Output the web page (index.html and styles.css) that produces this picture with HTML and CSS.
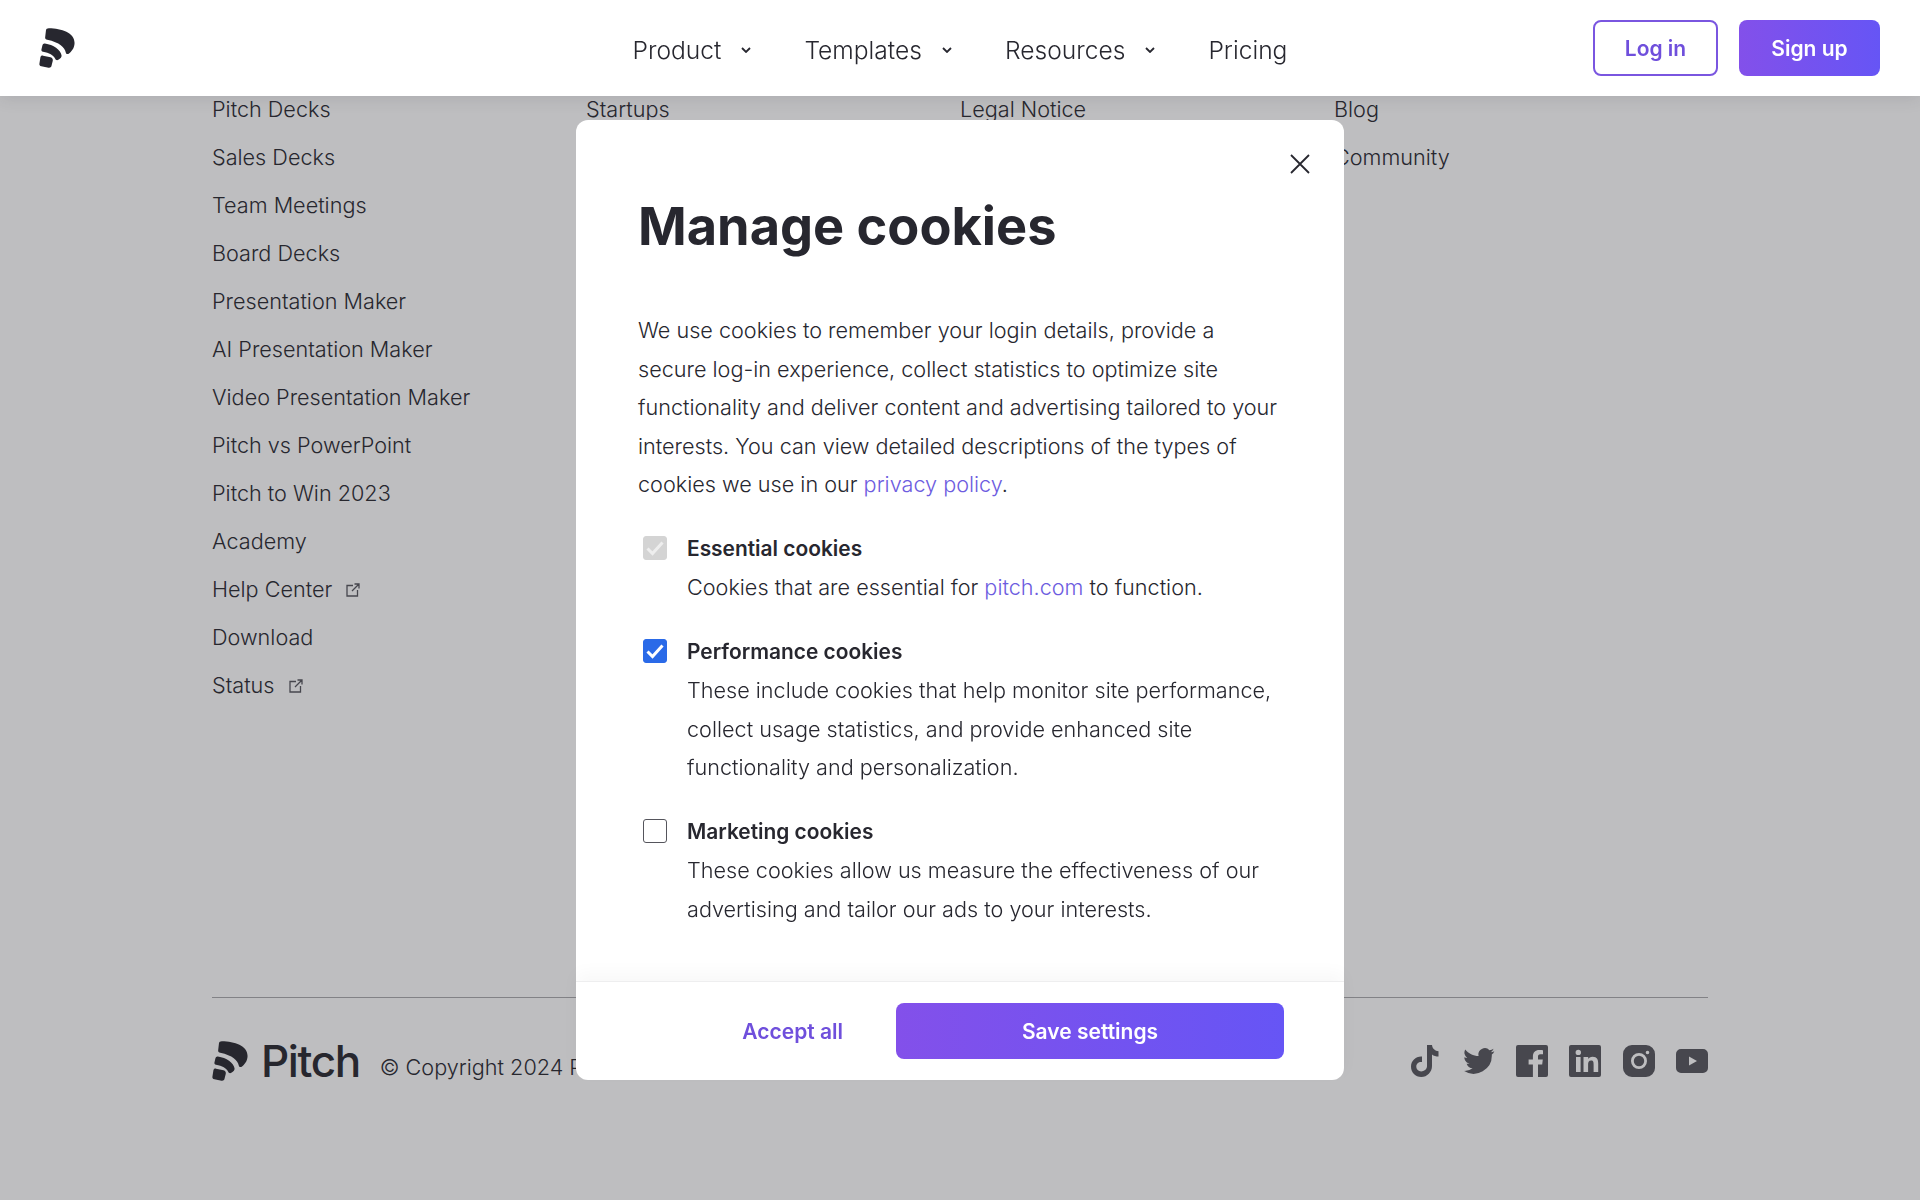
FILE: index.html
```html
<!DOCTYPE html>
<html lang="en">
  <head>
    <meta charset="UTF-8" />
    <title>Pitch</title>
    <link rel="stylesheet" href="styles.css">
  </head>

  <body>
    <header class="nav">
      <a class="nav-logo" href="#">
        <svg width="36" height="40" viewBox="19 30 110 123"><use href="#mark"/></svg>
      </a>
      <nav class="nav-links">
        <a href="#">Product <svg class="chev" width="10" height="6" viewBox="0 0 10 6"><path d="M1 1l4 4 4-4"/></svg></a>
        <a href="#">Templates <svg class="chev" width="10" height="6" viewBox="0 0 10 6"><path d="M1 1l4 4 4-4"/></svg></a>
        <a href="#">Resources <svg class="chev" width="10" height="6" viewBox="0 0 10 6"><path d="M1 1l4 4 4-4"/></svg></a>
        <a href="#">Pricing</a>
      </nav>
      <div class="nav-actions">
        <a class="btn btn-outline" href="#">Log in</a>
        <a class="btn btn-primary" href="#">Sign up</a>
      </div>
    </header>

    <footer class="footer">
      <div class="columns">
        <ul>
          <li>Pitch Decks</li>
          <li>Sales Decks</li>
          <li>Team Meetings</li>
          <li>Board Decks</li>
          <li>Presentation Maker</li>
          <li>AI Presentation Maker</li>
          <li>Video Presentation Maker</li>
          <li>Pitch vs PowerPoint</li>
          <li>Pitch to Win 2023</li>
          <li>Academy</li>
          <li>Help Center <svg class="ext" width="14" height="14" viewBox="0 0 14 14"><path d="M7 2.500H1v10.500h10.500V7M6 8l7-7M8.500 1H13v4.500"/></svg></li>
          <li>Download</li>
          <li>Status <svg class="ext" width="14" height="14" viewBox="0 0 14 14"><path d="M7 2.500H1v10.500h10.500V7M6 8l7-7M8.500 1H13v4.500"/></svg></li>
        </ul>
        <ul><li>Startups</li></ul>
        <ul><li>Legal Notice</li></ul>
        <ul><li>Blog</li><li>Community</li></ul>
      </div>
      <div class="footer-bottom">
        <div class="brand">
          <svg width="36" height="40" viewBox="19 30 110 123"><use href="#mark"/></svg>
          <span class="wordmark">Pitch</span>
          <span class="copyright">© Copyright 2024 Pitch. All rights reserved.</span>
        </div>
        <div class="social">
          <!-- tiktok -->
          <svg width="32" height="32" viewBox="0 0 32 32"><path d="M17 0h5c.3 3.400 3 6 6.500 6.300V11.500c-2.500 0-4.800-.8-6.500-2.100V21c0 6-4.800 11-10.700 11S1 27.400 1 21.500 6 11 12 11.500v5.600c-3-.6-5.700 1.500-5.700 4.400 0 2.700 2.200 4.900 4.900 4.900S17 24.200 17 21.300z"/></svg>
          <!-- twitter -->
          <svg width="32" height="32" viewBox="0 0 24 24"><path d="M23.500 4.600c-.9.400-1.800.6-2.700.8 1-.6 1.700-1.500 2.100-2.600-.9.500-1.900.9-3 1.100a4.800 4.800 0 0 0-8.200 4.400C7.700 8.100 4.100 6.200 1.700 3.300a4.800 4.800 0 0 0 1.500 6.400c-.8 0-1.500-.2-2.200-.6 0 2.300 1.600 4.300 3.900 4.800-.7.200-1.500.2-2.200.1.600 1.900 2.400 3.300 4.500 3.400A9.700 9.700 0 0 1 .5 19.400 13.700 13.700 0 0 0 21.600 7.200c.8-.7 1.500-1.600 1.900-2.600z"/></svg>
          <!-- facebook -->
          <svg width="32" height="32" viewBox="0 0 32 32"><path d="M2 0h28a2 2 0 0 1 2 2v28a2 2 0 0 1-2 2h-8V19.500h4.200l.6-4.900H22v-3c0-1.400.4-2.400 2.400-2.400H27V5.200c-.5 0-2-.2-3.800-.2-3.800 0-6.300 2.300-6.300 6.500v3.100h-4.300v4.900h4.300V32H2a2 2 0 0 1-2-2V2a2 2 0 0 1 2-2z"/></svg>
          <!-- linkedin -->
          <svg width="32" height="32" viewBox="0 0 32 32"><path fill-rule="evenodd" d="M2 0h28a2 2 0 0 1 2 2v28a2 2 0 0 1-2 2H2a2 2 0 0 1-2-2V2a2 2 0 0 1 2-2zm5 12v15h4.600V12zm2.300-7.300a2.700 2.700 0 1 0 0 5.400 2.700 2.700 0 0 0 0-5.400zM14.500 12v15h4.600v-7.600c0-2 .5-3.900 3-3.900s2.500 2.200 2.500 4V27h4.600v-8.300c0-4.100-.9-7-5.600-7-2.300 0-3.800 1.200-4.400 2.400V12z"/></svg>
          <!-- instagram -->
          <svg width="32" height="32" viewBox="0 0 32 32"><path fill-rule="evenodd" d="M9 0h14a9 9 0 0 1 9 9v14a9 9 0 0 1-9 9H9a9 9 0 0 1-9-9V9a9 9 0 0 1 9-9zm7 8a8 8 0 1 0 0 16 8 8 0 0 0 0-16zm0 2.800a5.200 5.200 0 1 1 0 10.400 5.200 5.200 0 0 1 0-10.400zM24.500 5.700a1.800 1.800 0 1 0 0 3.600 1.800 1.800 0 0 0 0-3.600z"/></svg>
          <!-- youtube -->
          <svg width="32" height="32" viewBox="0 0 32 32"><path fill-rule="evenodd" d="M5 4h22a5 5 0 0 1 5 5v14a5 5 0 0 1-5 5H5a5 5 0 0 1-5-5V9a5 5 0 0 1 5-5zm8 7.500v9l8-4.500z"/></svg>
        </div>
      </div>
    </footer>

    <div class="overlay">
      <section class="modal">
        <button class="close"><svg width="20" height="20" viewBox="0 0 20 20"><path d="M1 1l18 18M19 1L1 19"/></svg></button>
        <div class="modal-body">
          <h1>Manage cookies</h1>
          <p class="intro">We use cookies to remember your login details, provide a secure log-in experience, collect statistics to optimize site functionality and deliver content and advertising tailored to your interests. You can view detailed descriptions of the types of cookies we use in our <a href="#">privacy policy</a>.</p>

          <div class="option">
            <span class="box box-disabled"><svg width="18" height="18" viewBox="0 0 18 18"><path d="M1.500 9.500l5 5 10-11"/></svg></span>
            <div>
              <h3>Essential cookies</h3>
              <p>Cookies that are essential for <a href="#">pitch.com</a> to function.</p>
            </div>
          </div>
          <div class="option">
            <span class="box box-checked"><svg width="18" height="18" viewBox="0 0 18 18"><path d="M1.500 9.500l5 5 10-11"/></svg></span>
            <div>
              <h3>Performance cookies</h3>
              <p>These include cookies that help monitor site performance, collect usage statistics, and provide enhanced site functionality and personalization.</p>
            </div>
          </div>
          <div class="option">
            <span class="box"></span>
            <div>
              <h3>Marketing cookies</h3>
              <p>These cookies allow us measure the effectiveness of our advertising and tailor our ads to your interests.</p>
            </div>
          </div>
        </div>
        <div class="modal-footer">
          <a class="accept" href="#">Accept all</a>
          <a class="btn btn-primary btn-save" href="#">Save settings</a>
        </div>
      </section>
    </div>

    <svg class="defs" width="0" height="0">
      <defs>
        <g id="mark">
          <path d="M40 38C40 33 44 31 49 31 88 32 128 44 128 76 128 92 118 103 110 109 105 112 102 109 101 105 98 90 82 74 44 66 40 65 37 62 37.500 59Z"/>
          <path d="M29 84C30 80 33 77 37 78 63 82 85 97 88 114 89 120 85 124 78 128 73 130 70 128 68 124 63 113 50 107 31 103 27 102 26 100 26 97Z"/>
          <path d="M23 120C24 116 27 114 31 115L54 120C60 121 62 127 61 131L57 147C56 151 52 153 48 152L26 148C21 147 19 143 20 139Z"/>
        </g>
      </defs>
    </svg>
  </body>
</html>
```

FILE: styles.css
```css
* {
  box-sizing: border-box;
}

html,
body {
  height: 100%;
  margin: 0;
}

body {
  font-family: Inter, "Noto Sans", sans-serif;
  font-weight: 300;
  font-size: 21.640px;
  color: #27272f;
  background: #fff;
  overflow: hidden;
}

a {
  color: inherit;
  text-decoration: none;
}

.defs {
  position: absolute;
}

/* top bar */
.nav {
  position: fixed;
  top: 0;
  left: 0;
  right: 0;
  z-index: 3;
  height: 96px;
  background: #fff;
  box-shadow: 0 2px 16px rgba(39, 39, 47, 0.12);
}

.nav-logo {
  position: absolute;
  left: 39px;
  top: 28px;
  fill: #27272f;
}

.nav-links {
  display: flex;
  justify-content: center;
  align-items: center;
  gap: 53px;
  height: 100%;
  padding-top: 3px;
  font-size: 24.600px;
}

.nav-links a {
  display: flex;
  align-items: center;
  gap: 20px;
}

.chev {
  fill: none;
  stroke: #27272f;
  stroke-width: 1.800;
}

.nav-actions {
  position: absolute;
  right: 40px;
  top: 20px;
  display: flex;
  gap: 21px;
}

.btn {
  display: flex;
  align-items: center;
  justify-content: center;
  height: 56px;
  border-radius: 8px;
  font-size: 21px;
  font-weight: 600;
}

.btn-outline {
  width: 125px;
  border: 2px solid #7a56e0;
  color: #6f4fdc;
}

.btn-primary {
  width: 141px;
  color: #fff;
  background: linear-gradient(90deg, #8350ea, #6655f5);
}

/* page behind the dialog */
.footer {
  padding: 85px 212px 0;
}

.columns {
  display: grid;
  grid-template-columns: repeat(4, 374px);
  height: 912px;
}

.columns ul {
  list-style: none;
  margin: 0;
  padding: 0;
}

.columns li {
  height: 48px;
  line-height: 48px;
}

.ext {
  fill: none;
  stroke: #55555c;
  stroke-width: 1.300;
  margin-left: 8px;
}

.footer-bottom {
  display: flex;
  justify-content: space-between;
  align-items: center;
  height: 126px;
  border-top: 1px solid #a9a9ad;
}

.brand {
  display: flex;
  align-items: center;
  fill: #27272f;
}

.wordmark {
  margin-left: 13px;
  font-size: 44px;
  font-weight: 500;
  letter-spacing: -1.400px;
}

.copyright {
  margin-left: 20px;
  padding-top: 12px;
}

.social {
  display: flex;
  gap: 21.300px;
  fill: #55555c;
}

/* cookie dialog */
.overlay {
  position: fixed;
  inset: 0;
  z-index: 2;
  display: flex;
  align-items: center;
  justify-content: center;
  background: rgba(39, 39, 47, 0.3);
}

.modal {
  position: relative;
  display: flex;
  flex-direction: column;
  width: 768px;
  height: 960px;
  border-radius: 12px;
  background: #fff;
}

.close {
  position: absolute;
  top: 34px;
  right: 34px;
  width: 20px;
  height: 20px;
  padding: 0;
  border: 0;
  background: none;
}

.close svg {
  display: block;
  fill: none;
  stroke: #27272f;
  stroke-width: 1.800;
}

.modal-body {
  flex: 1;
  padding: 71px 62px 0;
}

h1 {
  margin: 0 0 50px;
  font-size: 52.300px;
  line-height: 70px;
  font-weight: 700;
}

.modal p {
  margin: 0;
  line-height: 38.500px;
}

.modal p a {
  color: #6d5ce0;
}

.option {
  display: flex;
  gap: 20px;
  margin-top: 25px;
}

.option h3 {
  margin: 0;
  font-size: 20.900px;
  line-height: 39.500px;
  font-weight: 600;
}

.box {
  flex: none;
  display: flex;
  align-items: center;
  justify-content: center;
  width: 24px;
  height: 24px;
  margin: 7px 0 0 5px;
  border: 1.500px solid #55555c;
  border-radius: 3px;
}

.box svg {
  flex: none;
  fill: none;
  stroke: #fff;
  stroke-width: 3;
}

.box-disabled {
  background: #d4d4d4;
  border-color: #d4d4d4;
}

.box-disabled svg {
  stroke: #eee;
}

.box-checked {
  background: #2a6ae8;
  border-color: #2a6ae8;
}

.modal-footer {
  display: flex;
  align-items: center;
  justify-content: flex-end;
  gap: 53px;
  height: 99px;
  padding-right: 60px;
  border-top: 1px solid #eeeeef;
  box-shadow: 0 -8px 16px rgba(39, 39, 47, 0.03);
}

.accept {
  font-size: 21px;
  font-weight: 600;
  color: #6f4fdc;
}

.btn-save {
  width: 388px;
}
```
